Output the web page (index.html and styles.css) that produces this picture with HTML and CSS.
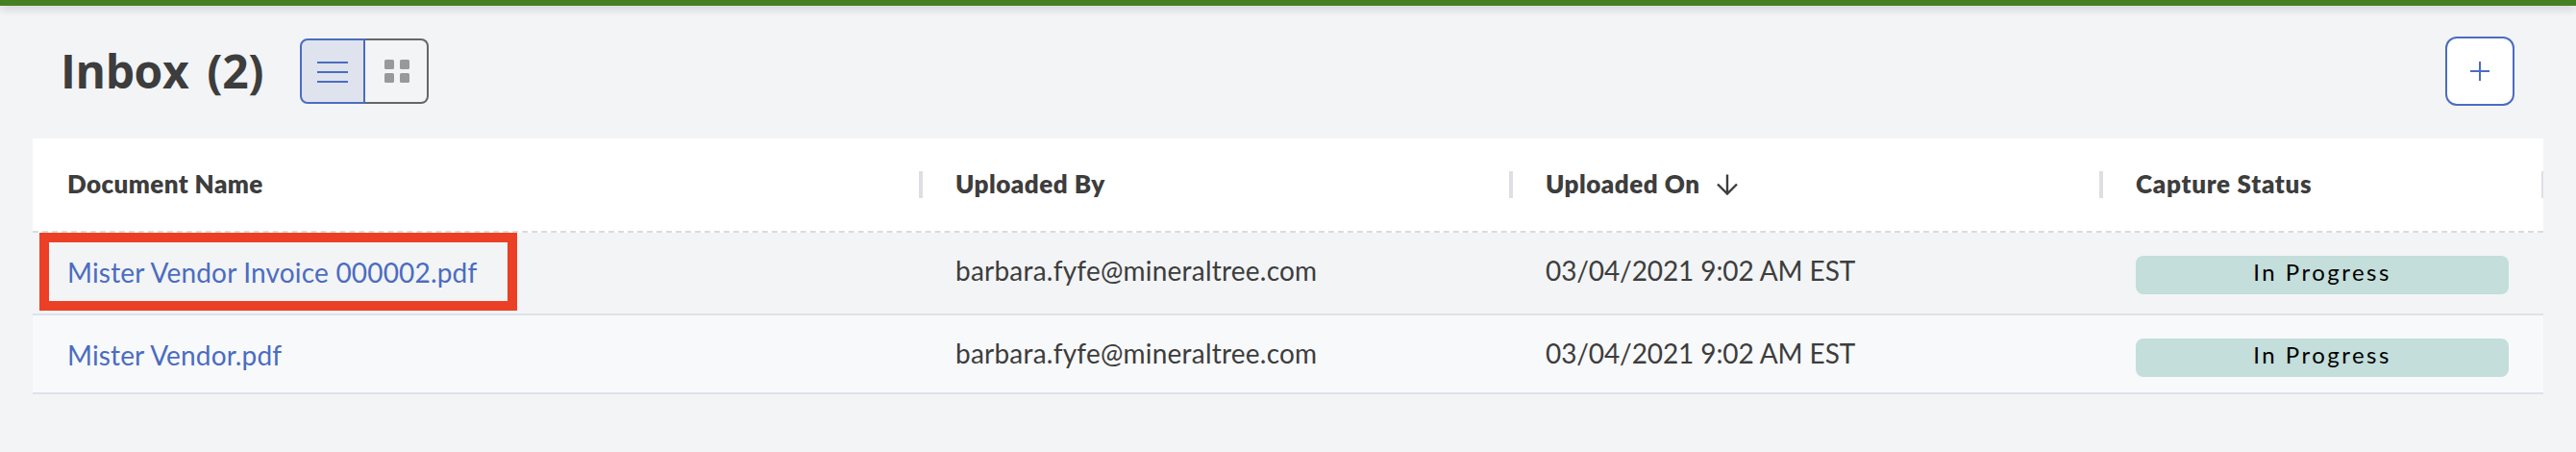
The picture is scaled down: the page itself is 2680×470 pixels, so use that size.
FILE: index.html
```
<!DOCTYPE html>
<html lang="en">
<head>
<meta charset="utf-8">
<title>Inbox</title>
<link rel="stylesheet" href="styles.css">
</head>
<body>
<div class="topbar"></div>
<header class="toolbar">
  <h1 class="title">Inbox (2)</h1>
  <div class="toggle">
    <button class="toggle-btn active" aria-label="List view">
      <svg width="32" height="22" viewBox="0 0 32 22"><path d="M0 1h32M0 11h32M0 21h32" stroke="#4b6cc0" stroke-width="2"/></svg>
    </button>
    <button class="toggle-btn grid" aria-label="Grid view">
      <svg width="26" height="24" viewBox="0 0 26 24" fill="#999"><rect width="10" height="10" rx="1.5"/><rect x="16" width="10" height="10" rx="1.5"/><rect y="14" width="10" height="10" rx="1.5"/><rect x="16" y="14" width="10" height="10" rx="1.5"/></svg>
    </button>
  </div>
  <button class="add" aria-label="Add">
    <svg width="20" height="20" viewBox="0 0 20 20"><path d="M10 0v20M0 10h20" stroke="#4b6cc0" stroke-width="2"/></svg>
  </button>
</header>
<main class="table">
  <div class="row head">
    <div class="cell h-name">Document Name<i class="sep"></i></div>
    <div class="cell h-by">Uploaded By<i class="sep"></i></div>
    <div class="cell h-on">Uploaded On
      <svg class="sort" width="22" height="22" viewBox="0 0 22 22" fill="none" stroke="#3d3d3d" stroke-width="2.4"><path d="M11 .5v20M1 10.5l10 10 10-10"/></svg>
      <i class="sep"></i></div>
    <div class="cell h-status">Capture Status<i class="sep last"></i></div>
  </div>
  <div class="row first">
    <div class="cell"><a class="link">Mister Vendor Invoice 000002.pdf</a><div class="highlight"></div></div>
    <div class="cell email">barbara.fyfe@mineraltree.com</div>
    <div class="cell date">03/04/2021 9:02 AM EST</div>
    <div class="cell"><div class="badge">In Progress</div></div>
  </div>
  <div class="row second">
    <div class="cell"><a class="link short">Mister Vendor.pdf</a></div>
    <div class="cell email">barbara.fyfe@mineraltree.com</div>
    <div class="cell date">03/04/2021 9:02 AM EST</div>
    <div class="cell"><div class="badge">In Progress</div></div>
  </div>
</main>
</body>
</html>
```
FILE: styles.css
```
* { box-sizing: border-box; }
body {
  margin: 0;
  height: 470px;
  background: #f2f4f6;
  color: #3d3d3d;
  font-family: Lato, sans-serif;
  overflow: hidden;
}
svg { display: block; }
button { padding: 0; margin: 0; font: inherit; }
.topbar { height: 6px; background: #478022; box-shadow: 0 3px 10px rgba(0, 0, 0, .18); }
.toolbar {
  display: flex;
  align-items: flex-start;
  height: 138px;
  padding: 32px 64px 0 63px;
}
.title {
  margin: 3px 0 0;
  width: 249px;
  font: 700 48px/66px "Open Sans", sans-serif;
  letter-spacing: -.4px;
  word-spacing: 7px;
  white-space: nowrap;
}
.toggle { display: flex; margin-top: 2px; }
.toggle-btn {
  display: flex;
  align-items: center;
  justify-content: center;
  width: 66px;
  height: 68px;
  background: none;
  border: 2px solid #666;
  border-left: 0;
  border-radius: 0 8px 8px 0;
}
.toggle-btn.active {
  width: 68px;
  padding-top: 2px;
  background: #dfe3ee;
  border: 2px solid #4b6cc0;
  border-radius: 8px 0 0 8px;
}
.toggle-btn.grid { padding-left: 2px; }
.add {
  display: flex;
  align-items: center;
  justify-content: center;
  width: 72px;
  height: 72px;
  margin-left: auto;
  background: #fff;
  border: 2px solid #4b6cc0;
  border-radius: 12px;
}
.table { margin: 0 34px; }
.row { display: grid; grid-template-columns: 924px 614px 614px 460px; }
.cell { position: relative; padding: 22px 36px 0; font-size: 28px; line-height: 35px; white-space: nowrap; }
.head { height: 98px; background: #fff; border-bottom: 2px dashed #dbdbdb; }
.head .cell { display: flex; padding-top: 31px; font-size: 26px; line-height: 32px; font-weight: 800; }
.h-name { letter-spacing: .4px; }
.h-by, .h-on { letter-spacing: .5px; }
.h-status { letter-spacing: .73px; }
.sort { margin: 6px 0 0 17px; }
.sep { position: absolute; top: 34px; right: -2px; width: 4px; height: 28px; background: #dedee4; }
.sep.last { right: 0; width: 2px; }
.first { height: 86px; border-bottom: 2px solid #dde2ea; }
.second { height: 82px; background: #f8f9fb; border-bottom: 2px solid #dde2ea; }
.link { display: block; margin-top: 2px; color: #4b6cc0; letter-spacing: .18px; }
.link.short { letter-spacing: .14px; }
.email { letter-spacing: .22px; }
.date { letter-spacing: -.1px; }
.highlight { position: absolute; left: 7px; top: 0; width: 497px; height: 81px; border: 10px solid #eb4025; }
.badge {
  height: 40px;
  margin-top: 2px;
  border-radius: 8px;
  background: #c3dedb;
  color: #000;
  font-size: 24px;
  line-height: 34px;
  letter-spacing: 2.5px;
  text-align: center;
}
```
